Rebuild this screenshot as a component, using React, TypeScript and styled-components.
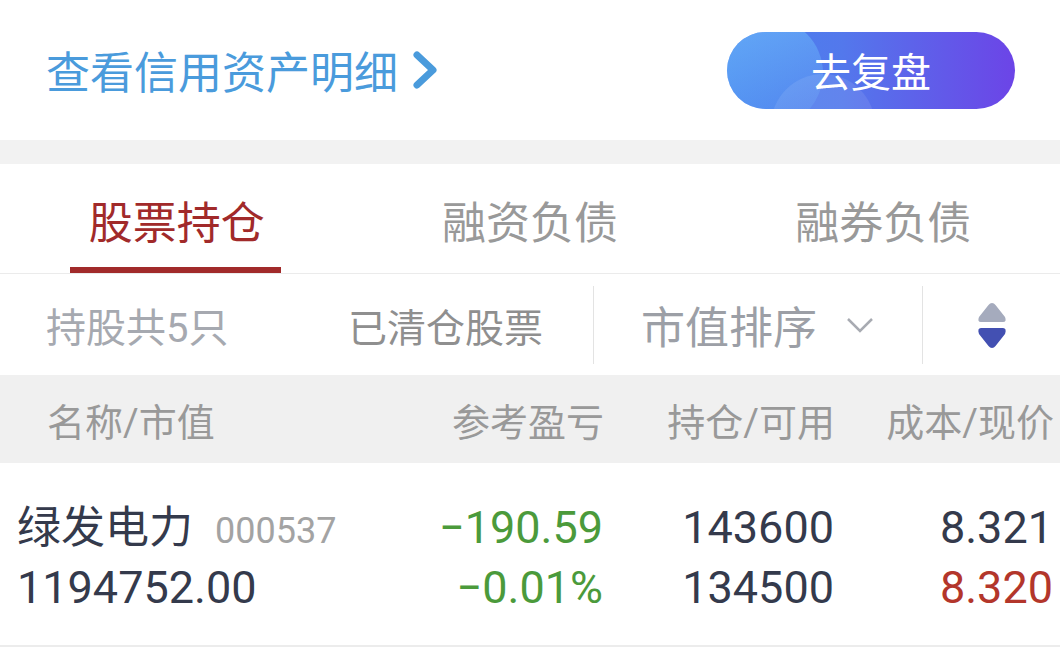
import React from 'react';
import styled, { createGlobalStyle } from 'styled-components';

const GlobalStyle = createGlobalStyle`
  * { box-sizing: border-box; }
  body {
    margin: 0;
    background: #fff;
    font-family: Roboto, "Noto Sans CJK SC", sans-serif;
  }
`;

const Page = styled.div`
  width: 1060px;
  background: #fff;
`;

const TopBar = styled.div`
  height: 140px;
  display: flex;
  align-items: center;
  justify-content: space-between;
  padding: 0 45px 0 46px;
`;

const DetailLink = styled.a`
  display: flex;
  align-items: center;
  gap: 14px;
  color: #4a9bdc;
  font-size: 44px;
  text-decoration: none;
`;

const ReviewButton = styled.button`
  position: relative;
  overflow: hidden;
  width: 288px;
  height: 77px;
  border: none;
  border-radius: 39px;
  background: linear-gradient(90deg, #4882ee 0%, #5378ec 40%, #6c44e7 100%);
  color: #fff;
  font-family: "Noto Sans CJK SC", sans-serif;
  font-size: 40px;
  cursor: pointer;

  &::before {
    content: '';
    position: absolute;
    left: -14px;
    top: -14px;
    width: 110px;
    height: 110px;
    border-radius: 50%;
    background: linear-gradient(160deg, rgba(110, 185, 250, 0.75) 0%, rgba(90, 160, 245, 0.15) 100%);
  }

  &::after {
    content: '';
    position: absolute;
    left: 44px;
    top: 42px;
    width: 104px;
    height: 104px;
    border-radius: 50%;
    background: rgba(255, 255, 255, 0.09);
  }
`;

const ButtonLabel = styled.span`
  position: relative;
  z-index: 1;
`;

const Band = styled.div`
  height: 24px;
  background: #f2f2f2;
`;

const Tabs = styled.div`
  display: grid;
  grid-template-columns: repeat(3, 1fr);
  height: 110px;
  border-bottom: 1px solid #ebebeb;
`;

const Tab = styled.div<{ $active?: boolean }>`
  position: relative;
  display: flex;
  align-items: center;
  justify-content: center;
  padding-top: 2px;
  font-size: 44px;
  color: ${(p) => (p.$active ? '#a12a2a' : '#999')};

  &::after {
    content: '';
    display: ${(p) => (p.$active ? 'block' : 'none')};
    position: absolute;
    bottom: 0;
    left: 50%;
    width: 211px;
    height: 6px;
    margin-left: -107px;
    background: #a12a2a;
  }
`;

const FilterBar = styled.div`
  display: flex;
  align-items: center;
  height: 101px;
`;

const FilterGroup = styled.div<{ $width: number }>`
  width: ${(p) => p.$width}px;
  height: 78px;
  display: flex;
  align-items: center;
  justify-content: center;
  border-right: 1px solid #e3e3e3;

  &:last-child {
    border-right: none;
  }
`;

const CountGroup = styled(FilterGroup)`
  justify-content: space-between;
  padding: 0 50px 0 46px;
`;

const FilterText = styled.span<{ $tone?: string; $size?: number }>`
  font-size: ${(p) => p.$size || 39}px;
  color: ${(p) => p.$tone || '#a6a9b0'};
`;

const SortLabel = styled.span`
  display: flex;
  align-items: center;
  gap: 28px;
  font-size: 44px;
  color: #9c9fa6;
`;

const TableHead = styled.div`
  display: grid;
  grid-template-columns: 1fr 200px 231px 219px;
  align-items: center;
  height: 88px;
  padding: 0 6px 0 47px;
  background: #f0f0f0;
`;

const HeadCell = styled.div<{ $left?: boolean }>`
  font-size: 38px;
  color: #999;
  text-align: ${(p) => (p.$left ? 'left' : 'right')};
  white-space: nowrap;
`;

const DataRow = styled.div`
  display: grid;
  grid-template-columns: 1fr 200px 231px 219px;
  align-items: center;
  height: 184px;
  padding: 8px 7px 0 17px;
  border-bottom: 2px solid #ececec;
`;

const DataCell = styled.div<{ $left?: boolean }>`
  display: flex;
  flex-direction: column;
  align-items: ${(p) => (p.$left ? 'flex-start' : 'flex-end')};
  white-space: nowrap;
`;

const Line = styled.div<{ $color?: string }>`
  height: 60px;
  line-height: 60px;
  font-size: 45px;
  color: ${(p) => p.$color || '#343a4c'};
`;

const StockName = styled.span`
  font-size: 44px;
  color: #343a4c;
`;

const StockCode = styled.span`
  margin-left: 22px;
  font-size: 36px;
  color: #a3a3a3;
`;

const GREEN = '#4b9a3b';
const RED = '#b3362b';

const App: React.FC = () => {
  return (
    <Page>
      <GlobalStyle />
      <TopBar>
        <DetailLink>
          查看信用资产明细
          <svg width="28" height="40" viewBox="0 0 28 40">
            <path d="M5 5 L21 20 L5 35" fill="none" stroke="#4a9bdc" strokeWidth="7" strokeLinecap="round" strokeLinejoin="round" />
          </svg>
        </DetailLink>
        <ReviewButton>
          <ButtonLabel>去复盘</ButtonLabel>
        </ReviewButton>
      </TopBar>

      <Band />

      <Tabs>
        <Tab $active>股票持仓</Tab>
        <Tab>融资负债</Tab>
        <Tab>融券负债</Tab>
      </Tabs>

      <FilterBar>
        <CountGroup $width={594}>
          <FilterText $size={40}>持股共5只</FilterText>
          <FilterText $tone="#8f8f8f">已清仓股票</FilterText>
        </CountGroup>
        <FilterGroup $width={329}>
          <SortLabel>
            市值排序
            <svg width="30" height="18" viewBox="0 0 30 18">
              <path d="M3 3 L15 15 L27 3" fill="none" stroke="#a8abb2" strokeWidth="2.5" />
            </svg>
          </SortLabel>
        </FilterGroup>
        <FilterGroup $width={137}>
          <svg width="34" height="50" viewBox="0 0 34 50">
            <path d="M17 3 Q19 3 20.5 5 L30 17 Q32 22 28 22 L6 22 Q2 22 4 17 L13.5 5 Q15 3 17 3 Z" fill="#a5abbd" />
            <path d="M17 48 Q19 48 20.5 46 L30 34 Q32 28 28 28 L6 28 Q2 28 4 34 L13.5 46 Q15 48 17 48 Z" fill="#4350b2" />
          </svg>
        </FilterGroup>
      </FilterBar>

      <TableHead>
        <HeadCell $left>名称/市值</HeadCell>
        <HeadCell>参考盈亏</HeadCell>
        <HeadCell>持仓/可用</HeadCell>
        <HeadCell>成本/现价</HeadCell>
      </TableHead>

      <DataRow>
        <DataCell $left>
          <Line>
            <StockName>绿发电力</StockName>
            <StockCode>000537</StockCode>
          </Line>
          <Line>1194752.00</Line>
        </DataCell>
        <DataCell>
          <Line $color={GREEN}>−190.59</Line>
          <Line $color={GREEN}>−0.01%</Line>
        </DataCell>
        <DataCell>
          <Line>143600</Line>
          <Line>134500</Line>
        </DataCell>
        <DataCell>
          <Line>8.321</Line>
          <Line $color={RED}>8.320</Line>
        </DataCell>
      </DataRow>
    </Page>
  );
};

export default App;
